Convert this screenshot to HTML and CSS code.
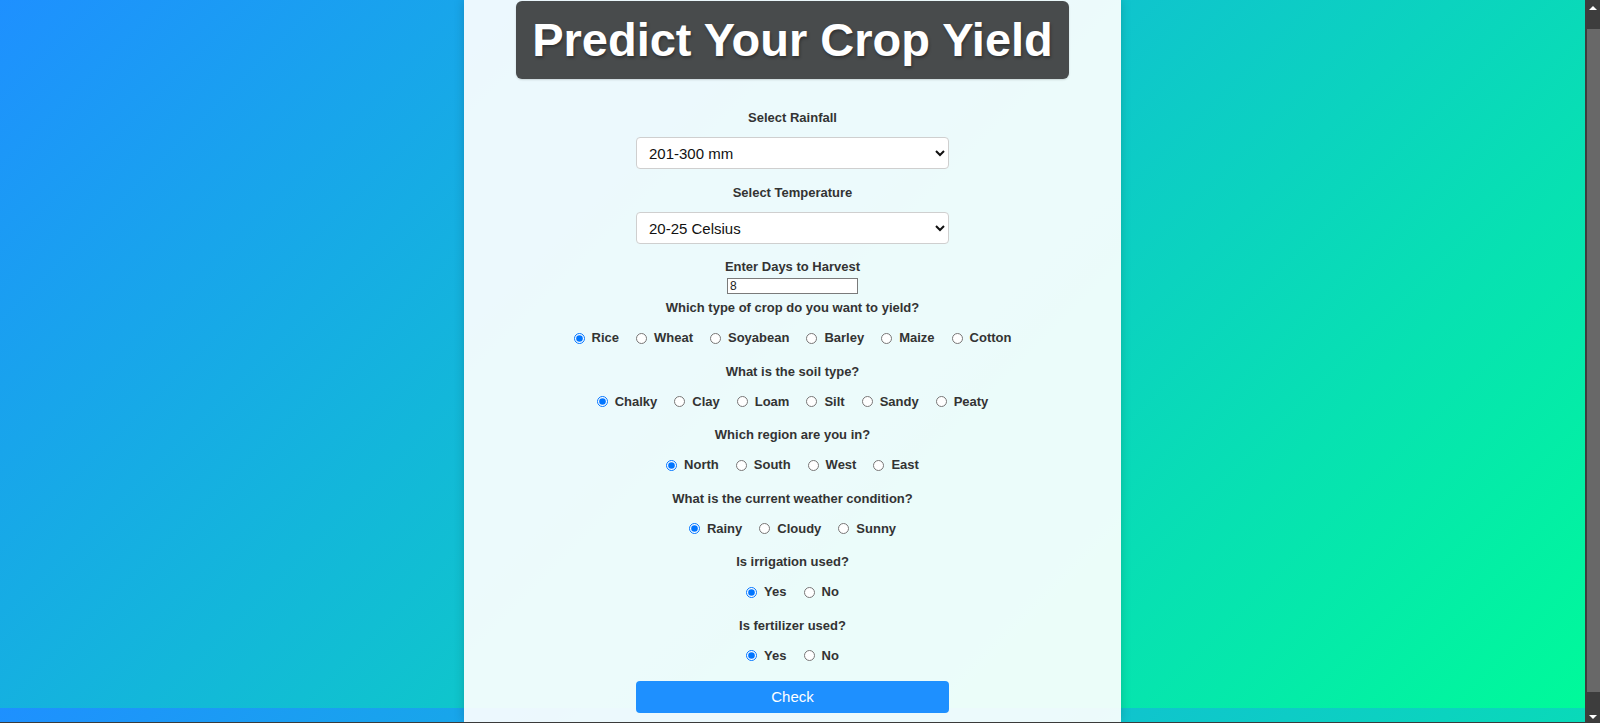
FILE: index.html
```html
<!DOCTYPE html>
<html lang="en">
<head>
<meta charset="utf-8">
<title>Predict Your Crop Yield</title>
<link rel="stylesheet" href="styles.css">
</head>
<body>
<div class="frame">
  <main class="viewport">
    <section class="card">
      <h1 class="title">Predict Your Crop Yield</h1>
      <form class="form">
        <label class="q q-select" for="rain">Select Rainfall</label>
        <select id="rain" class="select">
          <option>201-300 mm</option>
        </select>
        <label class="q q-select" for="temp">Select Temperature</label>
        <select id="temp" class="select">
          <option>20-25 Celsius</option>
        </select>
        <label class="q q-days" for="days">Enter Days to Harvest</label>
        <input id="days" class="days" type="text" value="8">

        <div class="q">Which type of crop do you want to yield?</div>
        <div class="row">
          <label class="opt"><input type="radio" name="crop" checked>Rice</label>
          <label class="opt"><input type="radio" name="crop">Wheat</label>
          <label class="opt"><input type="radio" name="crop">Soyabean</label>
          <label class="opt"><input type="radio" name="crop">Barley</label>
          <label class="opt"><input type="radio" name="crop">Maize</label>
          <label class="opt"><input type="radio" name="crop">Cotton</label>
        </div>

        <div class="q">What is the soil type?</div>
        <div class="row">
          <label class="opt"><input type="radio" name="soil" checked>Chalky</label>
          <label class="opt"><input type="radio" name="soil">Clay</label>
          <label class="opt"><input type="radio" name="soil">Loam</label>
          <label class="opt"><input type="radio" name="soil">Silt</label>
          <label class="opt"><input type="radio" name="soil">Sandy</label>
          <label class="opt"><input type="radio" name="soil">Peaty</label>
        </div>

        <div class="q">Which region are you in?</div>
        <div class="row">
          <label class="opt"><input type="radio" name="region" checked>North</label>
          <label class="opt"><input type="radio" name="region">South</label>
          <label class="opt"><input type="radio" name="region">West</label>
          <label class="opt"><input type="radio" name="region">East</label>
        </div>

        <div class="q">What is the current weather condition?</div>
        <div class="row">
          <label class="opt"><input type="radio" name="weather" checked>Rainy</label>
          <label class="opt"><input type="radio" name="weather">Cloudy</label>
          <label class="opt"><input type="radio" name="weather">Sunny</label>
        </div>

        <div class="q">Is irrigation used?</div>
        <div class="row">
          <label class="opt"><input type="radio" name="irr" checked>Yes</label>
          <label class="opt"><input type="radio" name="irr">No</label>
        </div>

        <div class="q">Is fertilizer used?</div>
        <div class="row">
          <label class="opt"><input type="radio" name="fert" checked>Yes</label>
          <label class="opt"><input type="radio" name="fert">No</label>
        </div>

        <button type="button" class="check">Check</button>
      </form>
    </section>
  </main>
  <div class="scrollbar" aria-hidden="true">
    <div class="sb-btn"><span class="tri-up"></span></div>
    <div class="sb-track"><div class="sb-thumb"></div></div>
    <div class="sb-btn"><span class="tri-down"></span></div>
  </div>
</div>
<div class="edge"></div>
</body>
</html>
```

FILE: styles.css
```css
* { box-sizing: border-box; }

html, body {
  margin: 0;
  padding: 0;
  height: 723px;
  overflow: hidden;
  background: #3a3a3a;
}

body {
  font-family: "Liberation Sans", Arial, sans-serif;
}

.frame {
  display: flex;
  height: 722px;
}

.viewport {
  flex: 1;
  display: flex;
  justify-content: center;
  background-image: linear-gradient(135deg, #1e90ff 0%, #00fa9a 100%);
  background-size: 100% 708px;
  background-repeat: repeat-y;
  overflow: hidden;
}

.card {
  width: 657px;
  display: flex;
  flex-direction: column;
  align-items: center;
  padding-top: 1px;
  background: rgba(255, 255, 255, 0.92);
  box-shadow: 0 0 10px rgba(0, 0, 0, 0.18);
}

.title {
  margin: 0;
  height: 78px;
  padding: 0 16px;
  line-height: 78px;
  font-size: 47px;
  font-weight: bold;
  color: #fff;
  background: #484b4c;
  border-radius: 6px;
  text-shadow: 1px 2px 3px rgba(0, 0, 0, 0.35);
  box-shadow: 0 1px 2px rgba(0, 0, 0, 0.15);
  white-space: nowrap;
}

.form {
  display: flex;
  flex-direction: column;
  align-items: center;
  padding-top: 31px;
}

.q {
  display: block;
  font-size: 13px;
  line-height: 16px;
  font-weight: bold;
  color: #333;
  margin-bottom: 14px;
  text-align: center;
}

.q-select { margin-bottom: 11px; }
.q-days { margin-bottom: 3px; }

.select {
  width: 313px;
  height: 32px;
  margin: 0 0 16px;
  padding: 0 8px 0 8px;
  font-family: "Liberation Sans", Arial, sans-serif;
  font-size: 15px;
  color: #111;
  background-color: #fff;
  border: 1px solid #cfcfcf;
  border-radius: 4px;
}

.select + .q-days { margin-top: -1px; }

.days {
  width: 131px;
  height: 16px;
  margin: 0 0 6px;
  padding: 0 2px;
  font-family: "Liberation Sans", Arial, sans-serif;
  font-size: 12px;
  color: #222;
  background: #fff;
  border: 1px solid #7a7a7a;
  border-radius: 0;
}

.row {
  display: flex;
  justify-content: center;
  gap: 17px;
  height: 16px;
  margin-bottom: 17.6px;
}

.opt {
  display: inline-flex;
  align-items: center;
  font-size: 13px;
  line-height: 16px;
  font-weight: bold;
  color: #333;
}

.opt input {
  width: 11px;
  height: 11px;
  margin: 0 7px 0 0;
}

.row:last-of-type { margin-bottom: 17px; }

.check {
  width: 313px;
  height: 32px;
  margin: 0;
  padding: 0;
  border: none;
  border-radius: 4px;
  background: #1e90ff;
  color: #fff;
  font-family: "Liberation Sans", Arial, sans-serif;
  font-size: 15px;
}

.scrollbar {
  width: 15px;
  display: flex;
  flex-direction: column;
  background: #3d3d3d;
}

.sb-btn {
  height: 17px;
  display: flex;
  align-items: center;
  justify-content: center;
}

.tri-up, .tri-down {
  width: 0;
  height: 0;
  border-left: 4px solid transparent;
  border-right: 4px solid transparent;
}

.tri-up { border-bottom: 4px solid #fff; margin-top: -1px; }
.tri-down { border-top: 4px solid #fff; margin-top: 6px; }

.sb-track {
  flex: 1;
  padding: 12px 0 13px 2px;
  display: flex;
}

.sb-thumb {
  flex: 1;
  background: #686868;
}

.edge {
  height: 1px;
  background: #3a3a3a;
}
```
